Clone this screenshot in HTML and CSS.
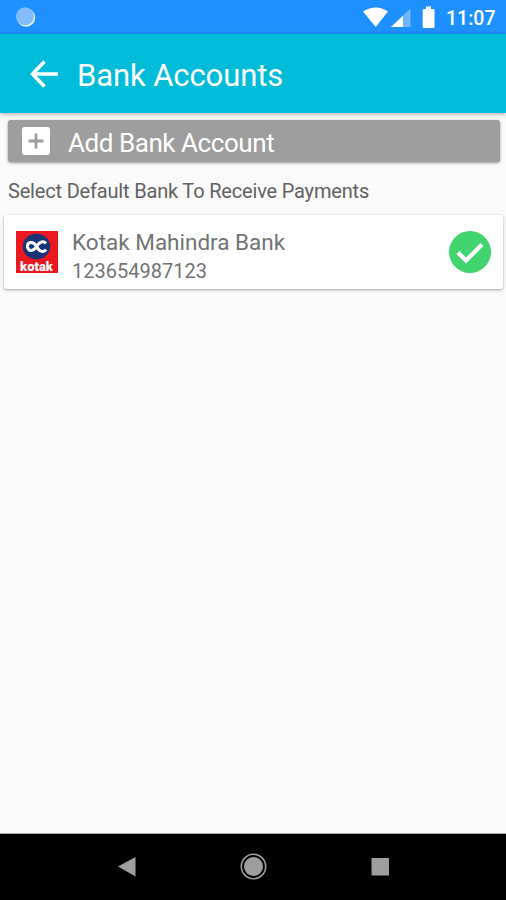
FILE: index.html
```html
<!DOCTYPE html>
<html lang="en">
<head>
<meta charset="utf-8">
<title>Bank Accounts</title>
<link rel="stylesheet" href="styles.css">
</head>
<body>
<div class="screen">
  <header class="status">
    <svg class="spinner" width="22" height="22" viewBox="0 0 22 22"><circle cx="11" cy="11.500" r="9.200" fill="#eef7ff"/><circle cx="10" cy="10.300" r="9" fill="#83bcff"/></svg>
    <svg class="signals" width="76" height="34" viewBox="0 0 76 34">
      <path d="M0 11.500Q13 3.500 25 11.500L12.700 27Z" fill="#fff"/>
      <path d="M47.500 8.500V27H28Z" fill="#72b5ff"/>
      <path d="M40 15.800V27H28Z" fill="#fff"/>
      <path d="M63 6.500h5V9h2.200q1.300 0 1.300 1.300V26.700q0 1.300-1.300 1.300H61q-1.300 0-1.300-1.300V10.300Q59.700 9 61 9h2Z" fill="#fff"/>
    </svg>
    <span class="clock">11:07</span>
  </header>
  <div class="appbar">
    <svg class="back" width="30" height="30" viewBox="0 0 30 30"><path d="M29 15H4M15.500 2.500L3.500 15L15.500 27.500" fill="none" stroke="#fff" stroke-width="3.600"/></svg>
    <h1 class="title">Bank Accounts</h1>
  </div>
  <main class="content">
    <div class="add">
      <svg class="plus" width="28" height="28" viewBox="0 0 28 28"><rect width="28" height="28" rx="3" fill="#fff"/><path d="M6.500 14h15M14 6.500v15" stroke="#9e9e9e" stroke-width="2.800"/></svg>
      <span class="add-text">Add Bank Account</span>
    </div>
    <p class="hint">Select Default Bank To Receive Payments</p>
    <div class="card">
      <div class="logo">
        <svg width="42" height="30" viewBox="0 0 42 30"><ellipse cx="20.500" cy="15.500" rx="13.700" ry="12.700" fill="#173477"/><path d="M30 12.500C27.500 9.500 23.500 10.500 20.500 15.500S12.500 21 11.500 16C11 10.500 17.500 9.500 20.500 15.500S28.500 21.500 30 18.500" fill="none" stroke="#fff" stroke-width="3"/></svg>
        <span class="logo-name">kotak</span>
      </div>
      <div class="details">
        <span class="bank">Kotak Mahindra Bank</span>
        <span class="number">123654987123</span>
      </div>
      <svg class="check" width="42" height="42" viewBox="0 0 42 42"><circle cx="21" cy="21" r="21" fill="#41d46f"/><path d="M9 21.500L17 29.500L33 13.500" fill="none" stroke="#fff" stroke-width="4.200"/></svg>
    </div>
  </main>
  <nav class="nav">
    <svg width="506" height="66" viewBox="0 0 506 66"><path d="M118 32.500L135.500 23V42.500Z" fill="#9e9e9e"/><circle cx="253.500" cy="32.500" r="9.500" fill="#9e9e9e"/><circle cx="253.500" cy="32.500" r="12.200" fill="none" stroke="#9e9e9e" stroke-width="1.600"/><rect x="371.500" y="24" width="17.500" height="17.500" fill="#9e9e9e"/></svg>
  </nav>
</div>
</body>
</html>
```
FILE: styles.css
```css
* { box-sizing: border-box; }
body { margin: 0; font-family: Roboto, sans-serif; background: #fafafa; }
svg { display: block; flex: none; }
.screen { width: 506px; height: 900px; display: flex; flex-direction: column; overflow: hidden; }
.status { height: 34px; flex: none; display: flex; align-items: center; background: #1e90ff; color: #fff; }
.spinner { margin-left: 15px; }
.signals { margin-left: 326px; }
.clock { margin: 4px 0 0 7px; font-size: 19.5px; font-weight: 500; line-height: 24px; white-space: nowrap; }
.appbar { height: 79px; flex: none; display: flex; align-items: center; padding-left: 29px; background: #00bcd9; box-shadow: 0 1px 4px rgba(0,0,0,.35); }
.title { margin: 5px 0 0 18px; font-size: 31px; font-weight: 400; line-height: 40px; letter-spacing: -.1px; color: #fff; white-space: nowrap; }
.content { flex: 1; padding-top: 7px; }
.add { height: 42px; margin: 0 6px 0 8px; padding-left: 14px; display: flex; align-items: center; border-radius: 3px; background: #9e9e9e; box-shadow: 0 1px 3px rgba(0,0,0,.4); }
.add-text { margin: 3px 0 0 18px; font-size: 26px; line-height: 32px; letter-spacing: -.44px; color: #fff; white-space: nowrap; }
.hint { margin: 16px 0 0 8px; font-size: 20px; line-height: 26px; letter-spacing: -.18px; color: #626262; white-space: nowrap; }
.card { height: 74px; margin: 11px 3px 0 4px; padding: 0 12px 0 11.5px; display: flex; align-items: center; border-radius: 3px; background: #fff; box-shadow: 0 1px 3px rgba(0,0,0,.35); }
.logo { width: 42px; height: 42px; flex: none; background: #ec1820; overflow: hidden; }
.logo-name { display: block; font: 900 13px/12px Roboto, sans-serif; text-align: center; color: #fff; }
.details { flex: 1; margin: 7px 0 0 14.5px; display: flex; flex-direction: column; color: #737373; white-space: nowrap; }
.bank { font-size: 22.5px; line-height: 30px; }
.number { font-size: 20px; line-height: 28px; }
.nav { height: 66px; flex: none; background: #000; box-shadow: 0 -1px 0 #aaa; }
```
